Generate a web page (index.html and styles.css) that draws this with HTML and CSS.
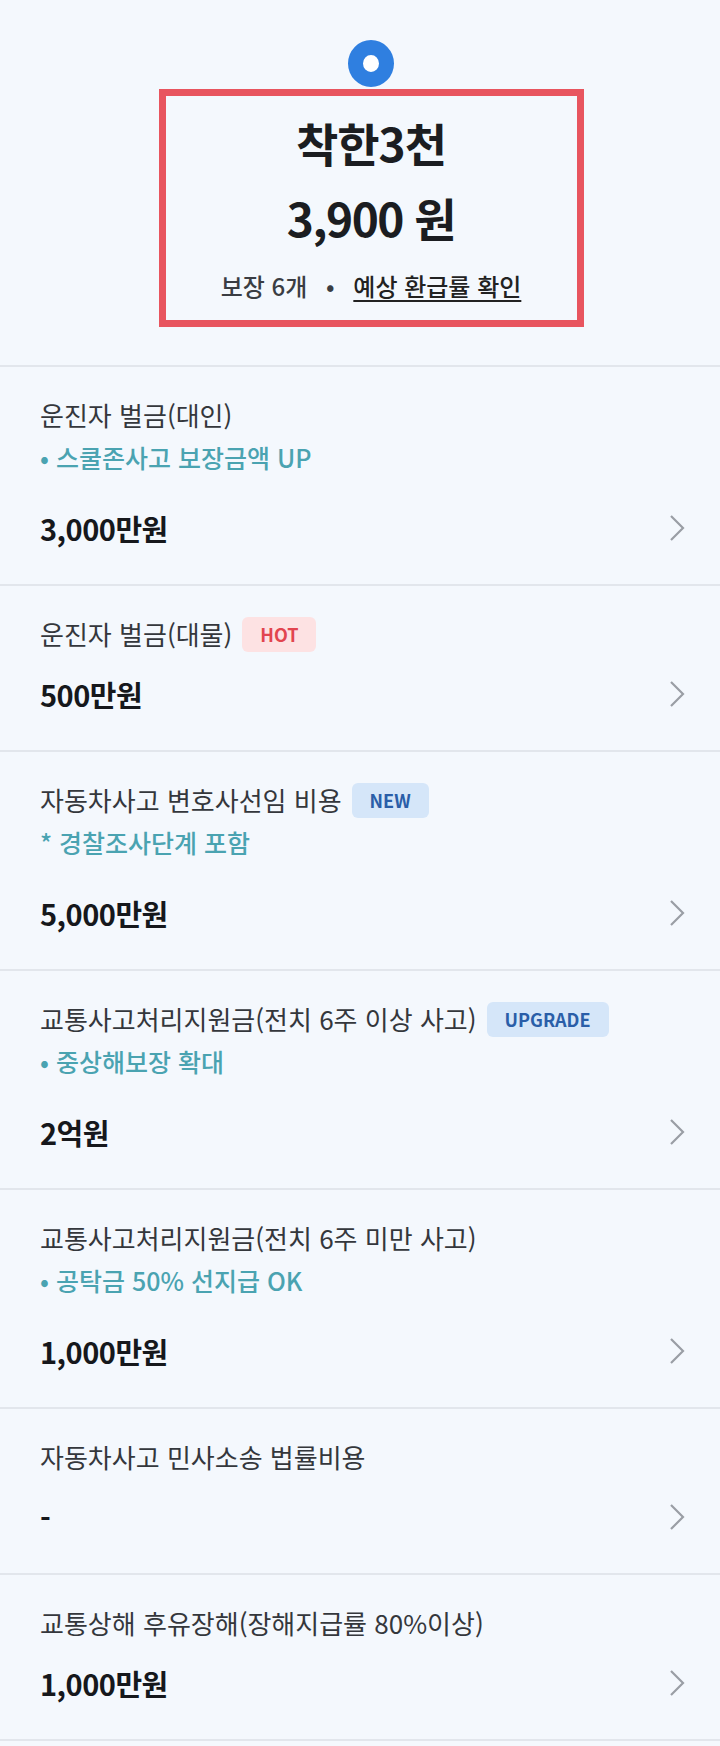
FILE: index.html
```html
<!DOCTYPE html>
<html lang="ko">
<head>
  <meta charset="UTF-8" />
  <meta name="viewport" content="width=device-width, initial-scale=1.0"/>
  <title>착한3천</title>
  <link rel="stylesheet" href="styles.css">
</head>
<body>
  <div class="summary">
    <div class="dot"></div>
    <div class="plan-box">
      <h2 class="plan-name">착한3천</h2>
      <div class="plan-price">3,900 원</div>
      <div class="plan-meta">
        <span>보장 6개</span>
        <span class="sep">•</span>
        <a class="refund-link">예상 환급률 확인</a>
      </div>
    </div>
  </div>

  <ul class="coverage">
    <li class="item">
      <div class="label">운진자 벌금(대인)</div>
      <div class="note">• 스쿨존사고 보장금액 UP</div>
      <div class="amount-row">
        <span class="amount">3,000만원</span>
        <svg class="chevron" viewBox="0 0 16 28"><path d="M2 2 L14 14 L2 26"/></svg>
      </div>
    </li>
    <li class="item">
      <div class="label">운진자 벌금(대물)<span class="badge hot">HOT</span></div>
      <div class="amount-row">
        <span class="amount">500만원</span>
        <svg class="chevron" viewBox="0 0 16 28"><path d="M2 2 L14 14 L2 26"/></svg>
      </div>
    </li>
    <li class="item">
      <div class="label">자동차사고 변호사선임 비용<span class="badge new">NEW</span></div>
      <div class="note">* 경찰조사단계 포함</div>
      <div class="amount-row">
        <span class="amount">5,000만원</span>
        <svg class="chevron" viewBox="0 0 16 28"><path d="M2 2 L14 14 L2 26"/></svg>
      </div>
    </li>
    <li class="item">
      <div class="label">교통사고처리지원금(전치 6주 이상 사고)<span class="badge new">UPGRADE</span></div>
      <div class="note">• 중상해보장 확대</div>
      <div class="amount-row">
        <span class="amount">2억원</span>
        <svg class="chevron" viewBox="0 0 16 28"><path d="M2 2 L14 14 L2 26"/></svg>
      </div>
    </li>
    <li class="item">
      <div class="label">교통사고처리지원금(전치 6주 미만 사고)</div>
      <div class="note">• 공탁금 50% 선지급 OK</div>
      <div class="amount-row">
        <span class="amount">1,000만원</span>
        <svg class="chevron" viewBox="0 0 16 28"><path d="M2 2 L14 14 L2 26"/></svg>
      </div>
    </li>
    <li class="item">
      <div class="label">자동차사고 민사소송 법률비용</div>
      <div class="amount-row">
        <span class="amount">-</span>
        <svg class="chevron" viewBox="0 0 16 28"><path d="M2 2 L14 14 L2 26"/></svg>
      </div>
    </li>
    <li class="item">
      <div class="label">교통상해 후유장해(장해지급률 80%이상)</div>
      <div class="amount-row">
        <span class="amount">1,000만원</span>
        <svg class="chevron" viewBox="0 0 16 28"><path d="M2 2 L14 14 L2 26"/></svg>
      </div>
    </li>
  </ul>
</body>
</html>
```

FILE: styles.css
```css
* {
  box-sizing: border-box;
}

body {
  margin: 0;
  background: #f4f8fd;
  font-family: 'Noto Sans CJK KR', 'Noto Sans', sans-serif;
  color: #333;
}

/* top summary */
.summary {
  display: flex;
  flex-direction: column;
  align-items: center;
  padding: 40px 0 38px 22px;
  border-bottom: 2px solid #e2e6ec;
}

.dot {
  width: 46px;
  height: 47px;
  border-radius: 50%;
  border: 15px solid #2f7fe0;
  background: #fff;
  margin-bottom: 2px;
}

.plan-box {
  width: 425px;
  height: 238px;
  border: 7px solid #e8555f;
  padding-top: 21px;
  text-align: center;
}

.plan-name {
  margin: 0;
  font-size: 46px;
  line-height: 50px;
  font-weight: 700;
  color: #1b1d21;
  letter-spacing: -1px;
}

.plan-price {
  margin-top: 23px;
  font-size: 46px;
  line-height: 54px;
  font-weight: 700;
  color: #1b1d21;
  letter-spacing: -1.5px;
}

.plan-meta {
  margin-top: 27px;
  font-size: 24px;
  line-height: 30px;
  font-weight: 500;
  color: #3a3d43;
}

.sep {
  margin: 0 12px;
}

.refund-link {
  color: #222;
  text-decoration: underline;
  text-underline-offset: 4px;
}

/* coverage list */
.coverage {
  list-style: none;
  margin: 0;
  padding: 0;
}

.item {
  display: flex;
  flex-direction: column;
  border-bottom: 2px solid #e2e6ec;
  padding: 30px 35px 38px 40px;
}

.label {
  display: flex;
  align-items: center;
  height: 36px;
  font-size: 26px;
  line-height: 36px;
  color: #34373c;
  white-space: nowrap;
}

.badge {
  display: inline-flex;
  align-items: center;
  height: 35px;
  padding: 0 18px;
  margin-left: 10px;
  border-radius: 6px;
  font-size: 18px;
  font-weight: 700;
}

.badge.hot {
  background: #fde2e3;
  color: #e2454f;
}

.badge.new {
  background: #d5e6f9;
  color: #2a5ea8;
}

.note {
  margin: 8px 0 13px;
  font-size: 25px;
  line-height: 32px;
  font-weight: 500;
  color: #4aa3b1;
}

.amount-row {
  display: flex;
  align-items: center;
  justify-content: space-between;
  margin-top: 24px;
  height: 36px;
}

.amount {
  font-size: 29px;
  font-weight: 700;
  color: #16181c;
  letter-spacing: -0.5px;
}

.chevron {
  width: 16px;
  height: 28px;
  fill: none;
  stroke: #9a9ea5;
  stroke-width: 2.2;
}
```
